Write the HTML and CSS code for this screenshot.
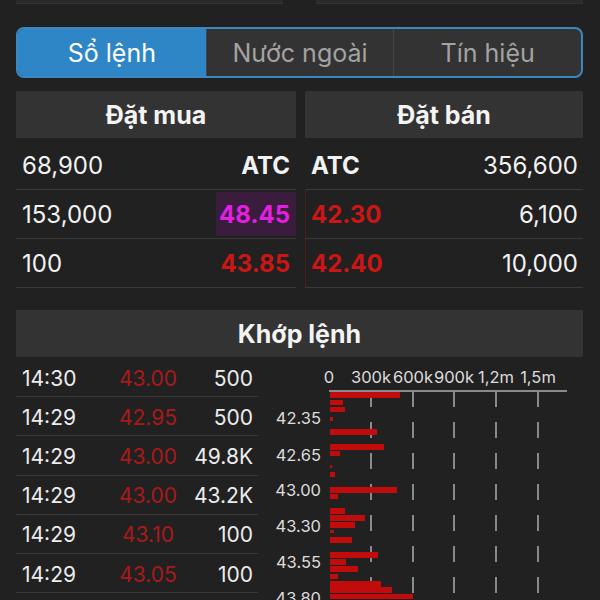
FILE: index.html
```html
<!DOCTYPE html>
<html lang="vi">
<head>
    <meta charset="UTF-8">
    <meta name="viewport" content="width=device-width, initial-scale=1.0">
    <title>Sổ lệnh</title>
    <link rel="stylesheet" href="styles.css">
</head>
<body>
    <div class="top-strip">
        <div></div>
        <div></div>
    </div>

    <div class="tabs">
        <div class="tab active">Sổ lệnh</div>
        <div class="tab">Nước ngoài</div>
        <div class="tab">Tín hiệu</div>
    </div>

    <div class="book">
        <div class="side">
            <div class="head">Đặt mua</div>
            <div class="row">
                <span class="qty">68,900</span>
                <span class="price">ATC</span>
            </div>
            <div class="row">
                <span class="qty">153,000</span>
                <span class="price ceil hl">48.45</span>
            </div>
            <div class="row">
                <span class="qty">100</span>
                <span class="price down">43.85</span>
            </div>
        </div>
        <div class="side sell">
            <div class="head">Đặt bán</div>
            <div class="row">
                <span class="price">ATC</span>
                <span class="qty">356,600</span>
            </div>
            <div class="row">
                <span class="price down mark">42.30</span>
                <span class="qty">6,100</span>
            </div>
            <div class="row">
                <span class="price down mark">42.40</span>
                <span class="qty">10,000</span>
            </div>
        </div>
    </div>

    <div class="head match-head">Khớp lệnh</div>

    <div class="match">
        <div class="trades">
            <div class="trade"><span>14:30</span><span class="tp">43.00</span><span class="tv">500</span></div>
            <div class="trade"><span>14:29</span><span class="tp">42.95</span><span class="tv">500</span></div>
            <div class="trade"><span>14:29</span><span class="tp">43.00</span><span class="tv">49.8K</span></div>
            <div class="trade"><span>14:29</span><span class="tp">43.00</span><span class="tv">43.2K</span></div>
            <div class="trade"><span>14:29</span><span class="tp">43.10</span><span class="tv">100</span></div>
            <div class="trade"><span>14:29</span><span class="tp">43.05</span><span class="tv">100</span></div>
        </div>

        <!-- volume by price -->
        <svg class="chart" width="342" height="242" viewBox="0 0 342 242">
            <g class="axis-labels" text-anchor="middle">
                <text x="71" y="25.5">0</text>
                <text x="113" y="25.5">300k</text>
                <text x="155" y="25.5">600k</text>
                <text x="196" y="25.5">900k</text>
                <text x="238" y="25.5">1,2m</text>
                <text x="280" y="25.5">1,5m</text>
            </g>
            <g class="grid">
                <line x1="113" y1="34" x2="113" y2="242"/>
                <line x1="155" y1="34" x2="155" y2="242"/>
                <line x1="196" y1="34" x2="196" y2="242"/>
                <line x1="238" y1="34" x2="238" y2="242"/>
                <line x1="280" y1="34" x2="280" y2="242"/>
            </g>
            <line class="axis" x1="71" y1="34" x2="309" y2="34"/>
            <g class="axis-labels" text-anchor="end">
                <text x="63" y="67">42.35</text>
                <text x="63" y="104">42.65</text>
                <text x="63" y="139">43.00</text>
                <text x="63" y="175">43.30</text>
                <text x="63" y="211">43.55</text>
                <text x="63" y="247">43.80</text>
            </g>
            <g class="bars">
                <rect x="72" y="35" width="70" height="6"/>
                <rect x="72" y="43" width="13" height="5"/>
                <rect x="72" y="50" width="15" height="5"/>
                <rect x="72" y="60" width="3" height="4"/>
                <rect x="72" y="72" width="47" height="6"/>
                <rect x="72" y="87" width="54" height="6"/>
                <rect x="72" y="94" width="10" height="5"/>
                <rect x="72" y="108" width="2" height="3"/>
                <rect x="72" y="115" width="5" height="5"/>
                <rect x="72" y="130" width="67" height="6"/>
                <rect x="72" y="137" width="8" height="5"/>
                <rect x="72" y="151" width="15" height="6"/>
                <rect x="72" y="158" width="35" height="6"/>
                <rect x="72" y="165" width="25" height="6"/>
                <rect x="72" y="173" width="4" height="3"/>
                <rect x="72" y="180" width="22" height="6"/>
                <rect x="72" y="195" width="48" height="6"/>
                <rect x="72" y="202" width="16" height="6"/>
                <rect x="72" y="209" width="28" height="6"/>
                <rect x="72" y="217" width="8" height="5"/>
                <rect x="72" y="224" width="51" height="6"/>
                <rect x="72" y="230" width="62" height="6"/>
                <rect x="72" y="237" width="83" height="5"/>
            </g>
        </svg>
    </div>
</body>
</html>
```

FILE: styles.css
```css
body {
    margin: 0;
    padding: 0 17px 0 16px;
    height: 600px;
    overflow: hidden;
    background-color: #212121;
    color: #f2f2f2;
    font-family: Inter, "Noto Sans", sans-serif;
}
.top-strip {
    display: flex;
    gap: 33px;
    height: 4px;
    margin-bottom: 23px;
}
.top-strip div {
    flex: 1;
    background-color: #2b2b2b;
    border-bottom: 1px solid #333;
}
.tabs {
    display: grid;
    grid-template-columns: 1fr 1fr 1fr;
    height: 47px;
    border: 2px solid #3b88c0;
    border-radius: 8px;
    overflow: hidden;
    background-color: #333;
}
.tab {
    display: flex;
    align-items: center;
    justify-content: center;
    font-size: 25px;
    color: #a3a3a3;
}
.tab + .tab {
    border-left: 1px solid #464646;
}
.tab.active {
    background-color: #2e86c6;
    color: #fff;
}
.book {
    display: grid;
    grid-template-columns: 280px 1fr;
    gap: 9px;
    margin-top: 13px;
}
.head {
    height: 47px;
    display: flex;
    align-items: center;
    justify-content: center;
    background-color: #333;
    font-size: 25px;
    font-weight: 700;
    color: #f4f4f4;
}
.row {
    display: flex;
    justify-content: space-between;
    height: 48px;
    border-bottom: 1px solid #393939;
    font-size: 24px;
}
.row:nth-child(2) {
    height: 47px;
    padding-top: 4px;
}
.row span {
    display: flex;
    align-items: center;
}
.side .qty {
    padding-left: 6px;
}
.side .price {
    padding: 0 6px 0 3px;
    font-weight: 700;
}
.sell .qty {
    padding: 0 5px 0 0;
}
.sell .price {
    padding: 0 0 0 6px;
}
.price.down {
    color: #cc1616;
}
.price.ceil {
    color: #e21fe2;
}
.price.hl {
    background-color: #3a1c3d;
    margin: 2px 0 2px;
}
.price.mark {
    border-left: 1px solid #4a1e1e;
    padding-left: 5px;
}
.match-head {
    margin-top: 22px;
}
.match {
    display: grid;
    grid-template-columns: 242px 1fr;
}
.trades {
    padding-top: 1px;
}
.trade {
    display: grid;
    grid-template-columns: 90px 72px 1fr;
    align-items: center;
    height: 36.2px;
    padding: 2px 5px 0 6px;
    border-bottom: 1px solid #383838;
    font-size: 21px;
    color: #ececec;
}
.trade .tp {
    text-align: center;
    color: #a81a1a;
}
.trade .tv {
    text-align: right;
}
.chart {
    display: block;
    overflow: visible;
}
.axis-labels {
    font-family: Inter, "Noto Sans", sans-serif;
    font-size: 16.5px;
    fill: #dcdcdc;
}
.grid line {
    stroke: #8a8a8a;
    stroke-width: 2;
    stroke-dasharray: 16 15;
}
.axis {
    stroke: #8a8a8a;
    stroke-width: 2;
}
.bars rect {
    fill: #c20c0c;
}
```
